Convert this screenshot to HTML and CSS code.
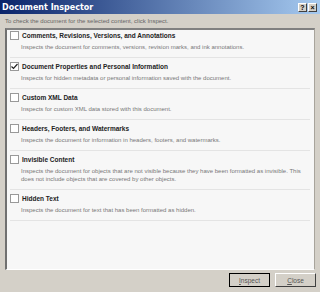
FILE: index.html
```html
<!DOCTYPE html>
<html>
<head>
<meta charset="utf-8">
<title>Document Inspector</title>
<link rel="stylesheet" href="styles.css">
</head>
<body>
<div class="dialog">
	<div class="titlebar">
		<span class="title">Document Inspector</span>
		<span class="tbtn">?</span>
		<span class="tbtn">&#215;</span>
	</div>
	<p class="intro">To check the document for the selected content, click Inspect.</p>
	<div class="panel">
		<div class="item">
			<div class="head"><span class="box"></span>Comments, Revisions, Versions, and Annotations</div>
			<p class="desc">Inspects the document for comments, versions, revision marks, and ink annotations.</p>
		</div>
		<div class="item">
			<div class="head"><span class="box"><svg width="7" height="7" viewBox="0 0 7 7"><path d="M0.5 3.5 L2.5 5.5 L6.5 1" fill="none" stroke="#222" stroke-width="1.2"/></svg></span>Document Properties and Personal Information</div>
			<p class="desc">Inspects for hidden metadata or personal information saved with the document.</p>
		</div>
		<div class="item">
			<div class="head"><span class="box"></span>Custom XML Data</div>
			<p class="desc">Inspects for custom XML data stored with this document.</p>
		</div>
		<div class="item">
			<div class="head"><span class="box"></span>Headers, Footers, and Watermarks</div>
			<p class="desc">Inspects the document for information in headers, footers, and watermarks.</p>
		</div>
		<div class="item">
			<div class="head"><span class="box"></span>Invisible Content</div>
			<p class="desc">Inspects the document for objects that are not visible because they have been formatted as invisible. This does not include objects that are covered by other objects.</p>
		</div>
		<div class="item">
			<div class="head"><span class="box"></span>Hidden Text</div>
			<p class="desc">Inspects the document for text that has been formatted as hidden.</p>
		</div>
	</div>
	<div class="buttons">
		<span class="btn default"><u>I</u>nspect</span>
		<span class="btn"><u>C</u>lose</span>
	</div>
</div>
</body>
</html>
```

FILE: styles.css
```css
body{
	margin: 0;
	padding: 0;
	font-family: "Liberation Sans", Arial, sans-serif;
	background: #d4d0c8;
}
.dialog{
	width: 320px;
	height: 292px;
	display: flex;
	flex-direction: column;
	background: #d4d0c8;
}
.titlebar{
	height: 14px;
	display: flex;
	align-items: center;
	gap: 1px;
	padding: 0 3px 0 2px;
	background: linear-gradient(to right, #0a246a, #a6caf0);
}
.title{
	flex: 1;
	color: #fff;
	font-family: "DejaVu Sans", Verdana, sans-serif;
	font-weight: bold;
	font-size: 8px;
}
.tbtn{
	width: 9px;
	height: 9px;
	box-sizing: border-box;
	background: #d4d0c8;
	border: 1px solid;
	border-color: #fff #404040 #404040 #fff;
	font-size: 7px;
	font-weight: bold;
	line-height: 7px;
	text-align: center;
	color: #000;
}
.intro{
	margin: 3px 0 0 5px;
	height: 11px;
	font-size: 6px;
	color: #666;
	line-height: 8px;
}
.panel{
	margin: 0 5px 0 5px;
	height: 242px;
	box-sizing: border-box;
	background: #f7f7f7;
	border-style: solid;
	border-width: 2px 1px 1px 2px;
	border-color: #808080 #a8a49c #fff #707070;
	padding: 0 4px 0 3px;
}
.item{
	border-bottom: 1px solid #e4e4e4;
	padding: 4px 0 6px 0;
}
.item:first-child{
	padding-top: 1px;
}
.head{
	display: flex;
	align-items: center;
	font-size: 6.5px;
	font-weight: bold;
	color: #222;
	height: 9px;
}
.box{
	width: 7px;
	height: 7px;
	border: 1px solid #999;
	background: #fff;
	margin-right: 3px;
	display: flex;
	align-items: center;
	justify-content: center;
}
.desc{
	margin: 3px 0 0 11px;
	font-size: 6px;
	line-height: 8px;
	color: #777;
}
.buttons{
	display: flex;
	justify-content: flex-end;
	gap: 5px;
	padding: 3px 4px 0 0;
}
.btn{
	width: 41px;
	height: 14px;
	box-sizing: border-box;
	border: 1px solid;
	border-color: #fff #404040 #404040 #fff;
	font-size: 6.5px;
	color: #555;
	display: flex;
	align-items: center;
	justify-content: center;
}
.btn.default{
	outline: 1px solid #000;
	outline-offset: -1px;
}
```
